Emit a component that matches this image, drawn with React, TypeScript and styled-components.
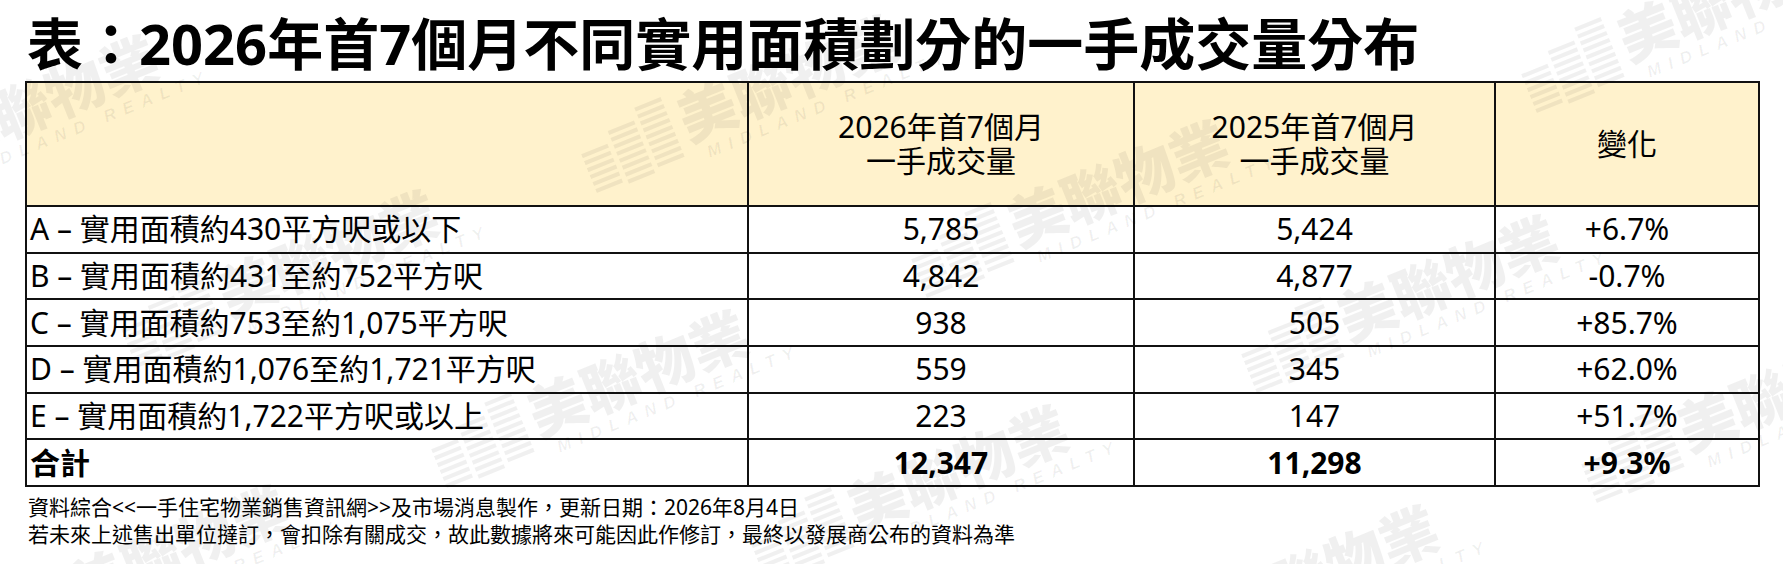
import React from 'react'
import styled, { createGlobalStyle } from 'styled-components'

const FONT = `"Noto Sans", "Noto Sans CJK TC", sans-serif`

const GlobalStyle = createGlobalStyle`
  html, body {
    margin: 0;
    padding: 0;
    background: #ffffff;
  }
  body {
    font-family: ${FONT};
    color: #000000;
  }
`

type Row = {
    label: string
    y2026: string
    y2025: string
    change: string
}

const rows: Row[] = [
    { label: 'A – 實用面積約430平方呎或以下', y2026: '5,785', y2025: '5,424', change: '+6.7%' },
    { label: 'B – 實用面積約431至約752平方呎', y2026: '4,842', y2025: '4,877', change: '-0.7%' },
    { label: 'C – 實用面積約753至約1,075平方呎', y2026: '938', y2025: '505', change: '+85.7%' },
    { label: 'D – 實用面積約1,076至約1,721平方呎', y2026: '559', y2025: '345', change: '+62.0%' },
    { label: 'E – 實用面積約1,722平方呎或以上', y2026: '223', y2025: '147', change: '+51.7%' },
]

const total: Row = { label: '合計', y2026: '12,347', y2025: '11,298', change: '+9.3%' }

// centre points of the faint brand watermarks
const marks = [
    { x: 20, y: 110 },
    { x: 760, y: 90 },
    { x: 1090, y: 195 },
    { x: 1420, y: 290 },
    { x: 1760, y: 400 },
    { x: 1700, y: 10 },
    { x: 300, y: 265 },
    { x: 610, y: 385 },
    { x: 930, y: 480 },
    { x: 150, y: 560 },
    { x: 1300, y: 580 },
]

const Logo = () => (
    <svg width="120" height="88" viewBox="0 0 120 88">
        {[0, 1, 2].map((col) => {
            const top = 28 - col * 14
            const count = Math.floor((88 - top) / 9)
            return Array.from({ length: count }).map((_, i) => (
                <rect
                    key={`${col}-${i}`}
                    x={col * 40}
                    y={top + i * 9}
                    width={34}
                    height={5}
                    fill="currentColor"
                />
            ))
        })}
    </svg>
)

export default function App() {
    return (
        <>
            <GlobalStyle />
            <Page>
                <Title>表：2026年首7個月不同實用面積劃分的一手成交量分布</Title>
                <Table>
                    <HeadCell />
                    <HeadCell>
                        2026年首7個月
                        <br />
                        一手成交量
                    </HeadCell>
                    <HeadCell>
                        2025年首7個月
                        <br />
                        一手成交量
                    </HeadCell>
                    <HeadCell>變化</HeadCell>
                    {rows.map((r) => (
                        <React.Fragment key={r.label}>
                            <LabelCell>{r.label}</LabelCell>
                            <ValueCell>{r.y2026}</ValueCell>
                            <ValueCell>{r.y2025}</ValueCell>
                            <ValueCell>{r.change}</ValueCell>
                        </React.Fragment>
                    ))}
                    <LabelCell $bold>{total.label}</LabelCell>
                    <ValueCell $bold>{total.y2026}</ValueCell>
                    <ValueCell $bold>{total.y2025}</ValueCell>
                    <ValueCell $bold>{total.change}</ValueCell>
                </Table>
                <Notes>
                    <p>資料綜合&lt;&lt;一手住宅物業銷售資訊網&gt;&gt;及市場消息製作，更新日期：2026年8月4日</p>
                    <p>若未來上述售出單位撻訂，會扣除有關成交，故此數據將來可能因此作修訂，最終以發展商公布的資料為準</p>
                </Notes>
                {marks.map((m, i) => (
                    <Watermark key={i} style={{ left: m.x - 190, top: m.y - 50 }}>
                        <Logo />
                        <MarkText>
                            <Brand>美聯物業</Brand>
                            <Tagline>MIDLAND REALTY</Tagline>
                        </MarkText>
                    </Watermark>
                ))}
            </Page>
        </>
    )
}

const Page = styled.div`
  position: relative;
  width: 1783px;
  height: 564px;
  overflow: hidden;
  box-sizing: border-box;
  padding: 10px 0 0 25px;
`

const Title = styled.h1`
  margin: 0 0 4px 2px;
  font-family: ${FONT};
  font-size: 56px;
  font-weight: 700;
  line-height: 67px;
  white-space: nowrap;
`

const Table = styled.div`
  display: grid;
  grid-template-columns: 720px 384px 359px 262px;
  grid-template-rows: 122px repeat(6, 44.7px);
  gap: 2px;
  padding: 2px;
  width: max-content;
  background: #111111;
`

const Cell = styled.div`
  display: flex;
  align-items: center;
  background: #ffffff;
  font-size: 30px;
  line-height: 34px;
  white-space: nowrap;
`

const HeadCell = styled(Cell)`
  justify-content: center;
  text-align: center;
  background: #fff2cc;
`

const LabelCell = styled(Cell)<{ $bold?: boolean }>`
  padding-left: 3px;
  font-weight: ${(p) => (p.$bold ? 700 : 400)};
`

const ValueCell = styled(Cell)<{ $bold?: boolean }>`
  justify-content: center;
  font-weight: ${(p) => (p.$bold ? 700 : 400)};
`

const Notes = styled.div`
  margin: 7px 0 0 3px;
  font-size: 21px;
  line-height: 27px;

  p {
    margin: 0;
    white-space: nowrap;
  }
`

const Watermark = styled.div`
  position: absolute;
  z-index: 2;
  display: flex;
  align-items: flex-end;
  gap: 4px;
  width: 380px;
  height: 100px;
  color: rgba(0, 0, 0, 0.06);
  transform: rotate(-22deg);
  pointer-events: none;
`

const MarkText = styled.div`
  display: flex;
  flex-direction: column;
  align-items: flex-start;
`

const Brand = styled.div`
  font-family: "Noto Sans CJK TC", sans-serif;
  font-size: 58px;
  font-weight: 900;
  line-height: 62px;
  white-space: nowrap;
`

const Tagline = styled.div`
  padding-left: 14px;
  font-family: "Liberation Sans", sans-serif;
  font-size: 17px;
  font-weight: 700;
  font-style: italic;
  letter-spacing: 8px;
  line-height: 22px;
  white-space: nowrap;
`
